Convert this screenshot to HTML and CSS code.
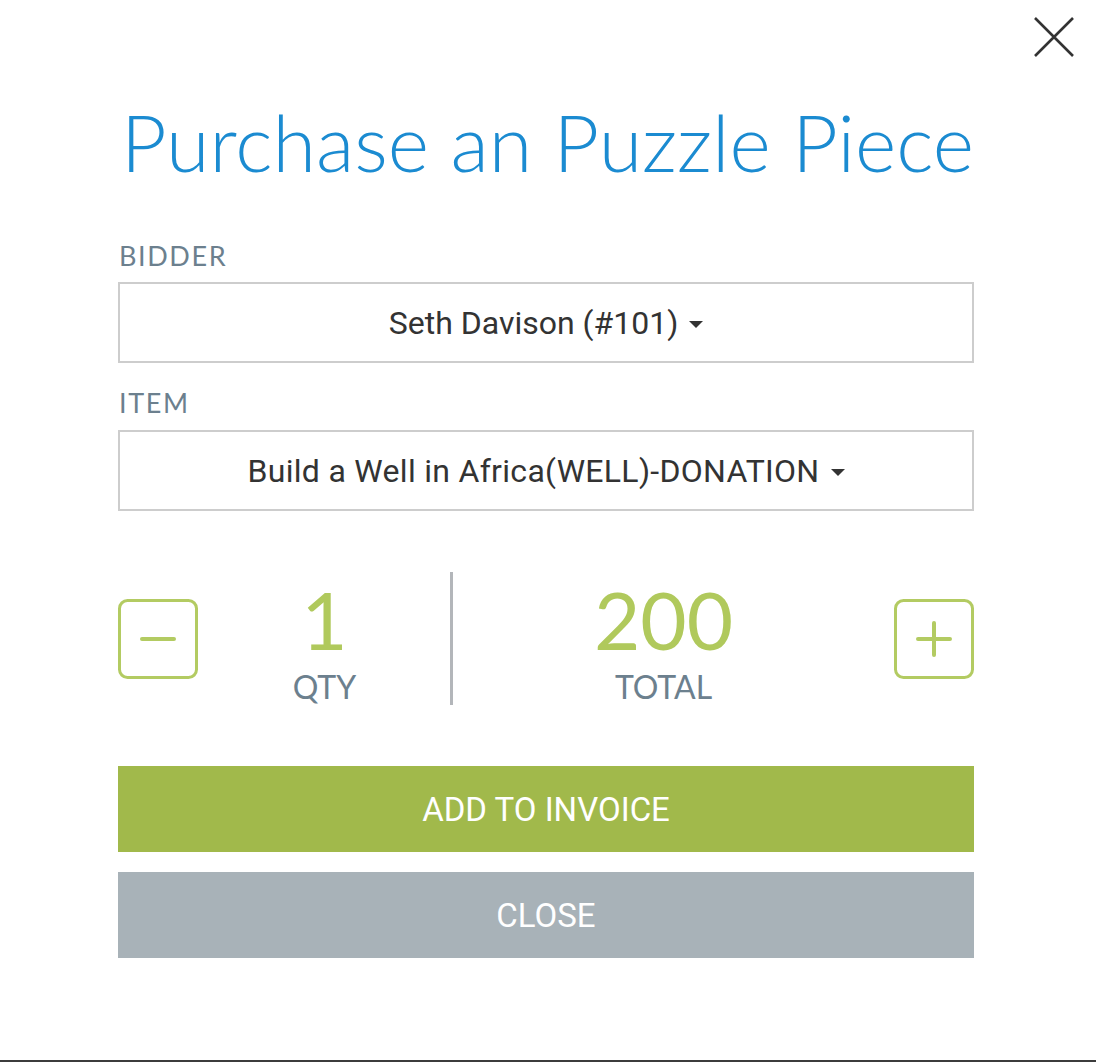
FILE: index.html
```html
<!DOCTYPE html>
<html>
<head>
<meta charset="utf-8">
<link rel="stylesheet" href="styles.css">
</head>
<body>
<div class="modal">
  <button class="close-x" aria-label="Close">
    <svg width="40" height="40" viewBox="0 0 40 40"><path d="M1 1 L39 39 M39 1 L1 39" stroke="#333" stroke-width="2.6" fill="none"/></svg>
  </button>
  <h1 class="title">Purchase an Puzzle Piece</h1>
  <div class="label label-first">BIDDER</div>
  <div class="select select-first"><span>Seth Davison (#101)</span><i class="caret"></i></div>
  <div class="label">ITEM</div>
  <div class="select select-item"><span>Build a Well in Africa(WELL)-DONATION</span><i class="caret"></i></div>
  <div class="qty-row">
    <div class="step-btn">
      <svg width="80" height="80" viewBox="0 0 80 80"><rect x="1.5" y="1.5" width="77" height="77" rx="8" fill="none" stroke="#b3cb62" stroke-width="3"/><path d="M24 40 H56" stroke="#b3cb62" stroke-width="4" stroke-linecap="round"/></svg>
    </div>
    <div class="stat stat-qty">
      <div class="num">1</div>
      <div class="cap">QTY</div>
    </div>
    <div class="divider"></div>
    <div class="stat stat-total">
      <div class="num">200</div>
      <div class="cap">TOTAL</div>
    </div>
    <div class="step-btn step-plus">
      <svg width="80" height="80" viewBox="0 0 80 80"><rect x="1.5" y="1.5" width="77" height="77" rx="8" fill="none" stroke="#b3cb62" stroke-width="3"/><path d="M24 40 H56 M40 24 V56" stroke="#b3cb62" stroke-width="4" stroke-linecap="round"/></svg>
    </div>
  </div>
  <button class="btn btn-add">ADD TO INVOICE</button>
  <button class="btn btn-close">CLOSE</button>
</div>
</body>
</html>
```
FILE: styles.css
```css
html, body {
  margin: 0;
  padding: 0;
}
body {
  background: #3c3c3c;
  height: 1062px;
  overflow: hidden;
}
.modal {
  position: relative;
  background: #ffffff;
  height: 1060px;
  box-sizing: border-box;
  padding: 91px 122px 0 118px;
  font-family: Lato, "Open Sans", sans-serif;
}
.close-x {
  position: absolute;
  top: 17px;
  left: 1034px;
  width: 40px;
  height: 40px;
  padding: 0;
  border: 0;
  background: none;
}
.close-x svg { display: block; }
.title {
  margin: 0;
  font-family: Lato, sans-serif;
  font-weight: 300;
  font-size: 79px;
  line-height: 98px;
  color: #1b8bd1;
  text-align: center;
  white-space: nowrap;
  position: relative;
  top: 2px;
  padding-left: 3px;
}
.label {
  margin-top: 24px;
  font-size: 27px;
  line-height: 31px;
  letter-spacing: 1.6px;
  color: #6c808e;
  padding-left: 1px;
}
.label-first { margin-top: 51px; }
.select {
  margin-top: 12px;
  height: 81px;
  box-sizing: border-box;
  border: 2px solid #cdcdcd;
  display: flex;
  align-items: center;
  justify-content: center;
  font-family: Roboto, "Liberation Sans", sans-serif;
  font-size: 32px;
  color: #333333;
}
.select-item { letter-spacing: 0.3px; }
.select-first { margin-top: 11px; }
.caret {
  display: inline-block;
  width: 0;
  height: 0;
  margin-left: 11px;
  margin-top: 3px;
  border-left: 7px solid transparent;
  border-right: 7px solid transparent;
  border-top: 7px solid #333333;
}
.qty-row {
  margin-top: 61px;
  height: 133px;
  display: flex;
  align-items: center;
}
.step-btn {
  width: 80px;
  height: 80px;
  flex: none;
}
.step-btn svg { display: block; }
.step-plus { margin-left: auto; }
.stat {
  align-self: stretch;
  box-sizing: border-box;
  padding-top: 7px;
  text-align: center;
}
.stat-qty { width: 253px; }
.stat-total { width: 421px; }
.num {
  font-size: 80px;
  line-height: 80px;
  color: #b0c95c;
}
.cap {
  margin-top: 10px;
  font-size: 32px;
  line-height: 36px;
  color: #6c808e;
}
.divider {
  width: 3px;
  height: 133px;
  background: #b3b6ba;
  margin-left: -1px;
  flex: none;
}
.btn {
  display: block;
  width: 856px;
  height: 86px;
  border: 0;
  padding: 0;
  color: #ffffff;
  font-family: Roboto, "Liberation Sans", sans-serif;
  font-size: 33px;
  text-align: center;
}
.btn-add {
  margin-top: 61px;
  background: #a1b94b;
}
.btn-close {
  margin-top: 20px;
  background: #a8b2b8;
}
```
